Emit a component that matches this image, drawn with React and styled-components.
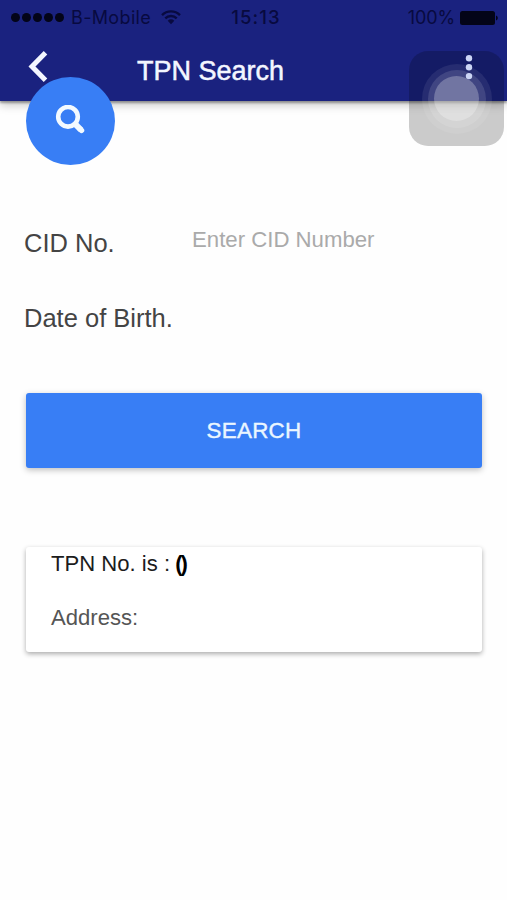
import React, { useState } from "react";
import styled, { createGlobalStyle } from "styled-components";

const GlobalStyle = createGlobalStyle`
  * {
    box-sizing: border-box;
  }
  body {
    margin: 0;
    background-color: #fff;
    font-family: "Liberation Sans", Arial, sans-serif;
  }
`;

const Screen = styled.div`
  position: relative;
  width: 507px;
  height: 900px;
  overflow: hidden;
  background-color: #fefefe;
`;

const Header = styled.header`
  height: 101px;
  background-color: #1a227f;
  box-shadow: 0 2px 2px rgba(0, 0, 0, 0.32), 0 4px 9px rgba(0, 0, 0, 0.22);
`;

const StatusBar = styled.div`
  display: grid;
  grid-template-columns: 1fr auto 1fr;
  align-items: center;
  height: 34px;
  padding: 0 9px 0 11px;
  color: #080a40;
  font-family: Inter, sans-serif;
  font-size: 18px;
  line-height: 35px;
`;

const StatusGroup = styled.div`
  display: flex;
  align-items: center;
  justify-content: ${(props) => (props.$end ? "flex-end" : "flex-start")};
`;

const Signal = styled.div`
  display: flex;
  gap: 2px;
  margin-right: 7px;
`;

const Dot = styled.span`
  width: 9px;
  height: 9px;
  border-radius: 50%;
  background-color: #030418;
`;

const Carrier = styled.span`
  margin-right: 10px;
  letter-spacing: 0.35px;
`;

const Clock = styled.span`
  padding-left: 3px;
  font-weight: 500;
  font-size: 18.5px;
  letter-spacing: 1.1px;
`;

const Percent = styled.span`
  margin-right: 5px;
  letter-spacing: -0.1px;
`;

const Toolbar = styled.div`
  display: flex;
  align-items: flex-start;
  height: 67px;
  padding-left: 27px;
`;

const IconButton = styled.button`
  display: flex;
  padding: 0;
  border: none;
  background: none;
  cursor: pointer;
`;

const BackButton = styled(IconButton)`
  margin-top: 16px;
`;

/* stays above the translucent assistive touch square */
const MenuButton = styled(IconButton)`
  position: relative;
  z-index: 2;
  margin: 20px 33px 0 auto;
`;

const Title = styled.h1`
  margin: 21px 0 0 88px;
  color: #f3f6ff;
  font-size: 27px;
  font-weight: 400;
  line-height: 32px;
  -webkit-text-stroke: 0.5px #f3f6ff;
`;

const SearchFab = styled.button`
  position: absolute;
  top: 77px;
  left: 26px;
  display: flex;
  align-items: center;
  justify-content: center;
  width: 89px;
  height: 88px;
  padding: 0;
  border: none;
  border-radius: 50%;
  background-color: #387ef5;
`;

const AssistiveTouch = styled.div`
  position: absolute;
  top: 51px;
  left: 409px;
  display: flex;
  align-items: center;
  justify-content: center;
  width: 95px;
  height: 95px;
  border-radius: 19px;
  background-color: rgba(0, 0, 0, 0.2);
`;

const Ring = styled.div`
  display: flex;
  align-items: center;
  justify-content: center;
  flex: none;
  width: ${(props) => props.$size}px;
  height: ${(props) => props.$size}px;
  border-radius: 50%;
  background-color: rgba(255, 255, 255, ${(props) => props.$alpha});
`;

const Content = styled.main`
  padding: 122px 25px 0 26px;
`;

const Field = styled.label`
  display: flex;
  height: ${(props) => props.$height}px;
  margin-left: -2px;
`;

const FieldLabel = styled.span`
  width: 168px;
  padding-top: 5px;
  color: #444;
  font-size: 25.5px;
  line-height: 30px;
  white-space: nowrap;
`;

const Input = styled.input`
  width: 260px;
  height: 34px;
  padding: 0;
  border: none;
  outline: none;
  background: transparent;
  color: #444;
  font-family: inherit;
  font-size: 22.2px;

  &::placeholder {
    color: #aaa;
    opacity: 1;
  }
`;

const SubmitButton = styled.button`
  display: block;
  width: 100%;
  height: 75px;
  padding: 0;
  border: none;
  border-radius: 3px;
  background-color: #387ef5;
  color: #eaf6ff;
  box-shadow: 0 2px 6px rgba(0, 0, 0, 0.26);
  font-family: inherit;
  font-size: 22.4px;
  letter-spacing: 0.3px;
  -webkit-text-stroke: 0.4px #eaf6ff;
`;

const ResultCard = styled.section`
  height: 105px;
  margin-top: 79px;
  padding: 3px 25px;
  border-radius: 3px;
  background-color: #fff;
  box-shadow: 0 2px 5px rgba(0, 0, 0, 0.33);
`;

const ResultText = styled.p`
  margin: 0 0 26px;
  color: ${(props) => (props.$muted ? "#555" : "#1c1c1c")};
  font-size: 22.1px;
  line-height: 28px;

  b {
    color: #000;
    letter-spacing: -2px;
    margin-left: -1px;
  }
`;

const WifiIcon = () => (
  <svg width="20" height="15" viewBox="0 0 20 15" fill="none" stroke="#080a40" strokeWidth="2.4">
    <path d="M1 5.1a12.7 12.7 0 0 1 18 0M4.3 8.4a8 8 0 0 1 11.4 0" />
    <path d="M6.7 10.7a4.7 4.7 0 0 1 6.6 0L10 14.2z" fill="#080a40" stroke="none" />
  </svg>
);

const BatteryIcon = () => (
  <svg width="38" height="14" viewBox="0 0 38 14">
    <rect width="35" height="14" rx="2.5" fill="#030418" />
    <path d="M36 4.5c2.4.8 2.4 4.2 0 5z" fill="#030418" />
  </svg>
);

const BackIcon = () => (
  <svg width="22" height="34" viewBox="0 0 22 34" fill="none" stroke="#f3f6ff" strokeWidth="5">
    <path d="M18.5 2.8L5 16.5l13.5 13.7" />
  </svg>
);

const MenuIcon = () => (
  <svg width="10" height="26" viewBox="0 0 10 26" fill="#ccd5f5">
    <circle cx="5" cy="4.3" r="3.2" />
    <circle cx="5" cy="13.2" r="3.2" />
    <circle cx="5" cy="22.1" r="3.2" />
  </svg>
);

const SearchIcon = () => (
  <svg width="32" height="32" viewBox="0 0 32 32" fill="none" stroke="#f3faff">
    <circle cx="13" cy="11.8" r="9.8" strokeWidth="4.6" />
    <path d="M19.3 18.2l6.8 6.8" strokeWidth="6" />
    <path d="M25 23.9l1.5 1.5" strokeWidth="5.5" strokeLinecap="round" />
  </svg>
);

const App = () => {
  const [cid, setCid] = useState("");

  return (
    <Screen>
      <GlobalStyle />
      <Header>
        <StatusBar>
          <StatusGroup>
            <Signal>
              {[1, 2, 3, 4, 5].map((n) => (
                <Dot key={n} />
              ))}
            </Signal>
            <Carrier>B-Mobile</Carrier>
            <WifiIcon />
          </StatusGroup>
          <Clock>15:13</Clock>
          <StatusGroup $end>
            <Percent>100%</Percent>
            <BatteryIcon />
          </StatusGroup>
        </StatusBar>
        <Toolbar>
          <BackButton>
            <BackIcon />
          </BackButton>
          <Title>TPN Search</Title>
          <MenuButton>
            <MenuIcon />
          </MenuButton>
        </Toolbar>
      </Header>

      <Content>
        <Field $height={75}>
          <FieldLabel>CID No.</FieldLabel>
          <Input
            type="text"
            value={cid}
            placeholder="Enter CID Number"
            onChange={(e) => setCid(e.target.value)}
          />
        </Field>
        <Field $height={95}>
          <FieldLabel>Date of Birth.</FieldLabel>
        </Field>
        <SubmitButton>SEARCH</SubmitButton>
        <ResultCard>
          <ResultText>
            TPN No. is : <b>()</b>
          </ResultText>
          <ResultText $muted>Address:</ResultText>
        </ResultCard>
      </Content>

      <SearchFab>
        <SearchIcon />
      </SearchFab>
      <AssistiveTouch>
        <Ring $size={70} $alpha={0.08}>
          <Ring $size={58} $alpha={0.12}>
            <Ring $size={45} $alpha={0.26} />
          </Ring>
        </Ring>
      </AssistiveTouch>
    </Screen>
  );
};

export default App;
